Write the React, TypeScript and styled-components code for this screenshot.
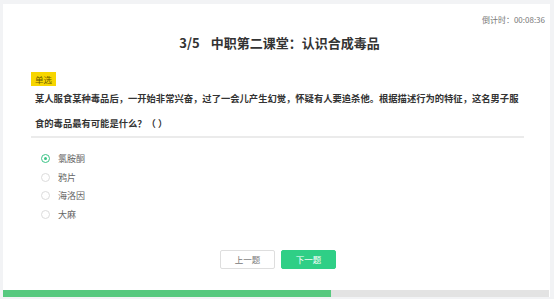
import { createGlobalStyle, styled } from "styled-components";

const GlobalStyle = createGlobalStyle`
  html, body {
    margin: 0;
    padding: 0;
    background: #f2f3f5;
    font-family: "Noto Sans CJK SC", "Noto Sans", sans-serif;
  }
`;

const Page = styled.div`
  width: 554px;
  height: 299px;
  padding: 4px 4px 2px 3px;
  box-sizing: border-box;
  display: flex;
`;

const Card = styled.div`
  flex: 1;
  background: #fff;
  display: flex;
  flex-direction: column;
  padding-top: 10px;
`;

const Timer = styled.div`
  font-size: 8px;
  line-height: 12px;
  color: #777;
  text-align: right;
  padding-right: 5px;
`;

const Title = styled.h1`
  margin: 7px 0 0;
  font-size: 13px;
  line-height: 20px;
  font-weight: 700;
  color: #333;
  text-align: center;
  padding-left: 6px;

  span {
    margin-right: 11px;
  }
`;

const Body = styled.div`
  padding: 0 26px 0 28px;
`;

const Tag = styled.div`
  margin-top: 19px;
  width: fit-content;
  background: #f7d600;
  color: #6b5a00;
  font-size: 8.5px;
  line-height: 14px;
  padding: 0 4px;
`;

const Question = styled.p`
  margin: 0;
  padding: 0 0 0 4px;
  font-size: 9.3px;
  line-height: 25px;
  font-weight: 700;
  color: #333;
  border-bottom: 2px solid #ebebeb;
`;

const Options = styled.ul`
  list-style: none;
  margin: 11px 0 0;
  padding: 0 0 0 10px;
`;

const Option = styled.li`
  display: flex;
  align-items: center;
  height: 18.7px;
  gap: 8px;
  font-size: 9px;
  color: #666;
`;

const Radio = styled.span<{ $checked?: boolean }>`
  width: 7px;
  height: 7px;
  border-radius: 50%;
  border: 1px solid ${({ $checked }) => ($checked ? "#3cc487" : "#dcdcdc")};
  display: flex;
  align-items: center;
  justify-content: center;

  &::after {
    content: "";
    width: 3px;
    height: 3px;
    border-radius: 50%;
    background: ${({ $checked }) => ($checked ? "#3cc487" : "transparent")};
  }
`;

const Actions = styled.div`
  display: flex;
  justify-content: center;
  gap: 6px;
  margin-top: 26px;
  padding-left: 1px;
`;

const Button = styled.button<{ $primary?: boolean }>`
  width: 55px;
  height: 19px;
  border-radius: 2px;
  font-family: inherit;
  font-size: 8.5px;
  padding: 0;
  cursor: pointer;
  border: 1px solid ${({ $primary }) => ($primary ? "#2fcf86" : "#dedede")};
  background: ${({ $primary }) => ($primary ? "#2fcf86" : "#fff")};
  color: ${({ $primary }) => ($primary ? "#fff" : "#777")};
`;

const Progress = styled.div`
  margin-top: auto;
  height: 7px;
  background: #e3e3e3;
  margin-right: 1px;
`;

const Fill = styled.div`
  height: 100%;
  background: #57c97f;
`;

const options = ["氯胺酮", "鸦片", "海洛因", "大麻"];

export default function App() {
  const current = 3;
  const total = 5;
  return (
    <>
      <GlobalStyle />
      <Page>
        <Card>
          <Timer>倒计时：00:08:36</Timer>
          <Title>
            <span>
              {current}/{total}
            </span>
            中职第二课堂：认识合成毒品
          </Title>
          <Body>
            <Tag>单选</Tag>
            <Question>
              某人服食某种毒品后，一开始非常兴奋，过了一会儿产生幻觉，怀疑有人要追杀他。根据描述行为的特征，这名男子服食的毒品最有可能是什么？（ ）
            </Question>
            <Options>
              {options.map((o, i) => (
                <Option key={o}>
                  <Radio $checked={i === 0} />
                  {o}
                </Option>
              ))}
            </Options>
            <Actions>
              <Button>上一题</Button>
              <Button $primary>下一题</Button>
            </Actions>
          </Body>
          <Progress>
            <Fill style={{ width: `${(current / total) * 100}%` }} />
          </Progress>
        </Card>
      </Page>
    </>
  );
}
